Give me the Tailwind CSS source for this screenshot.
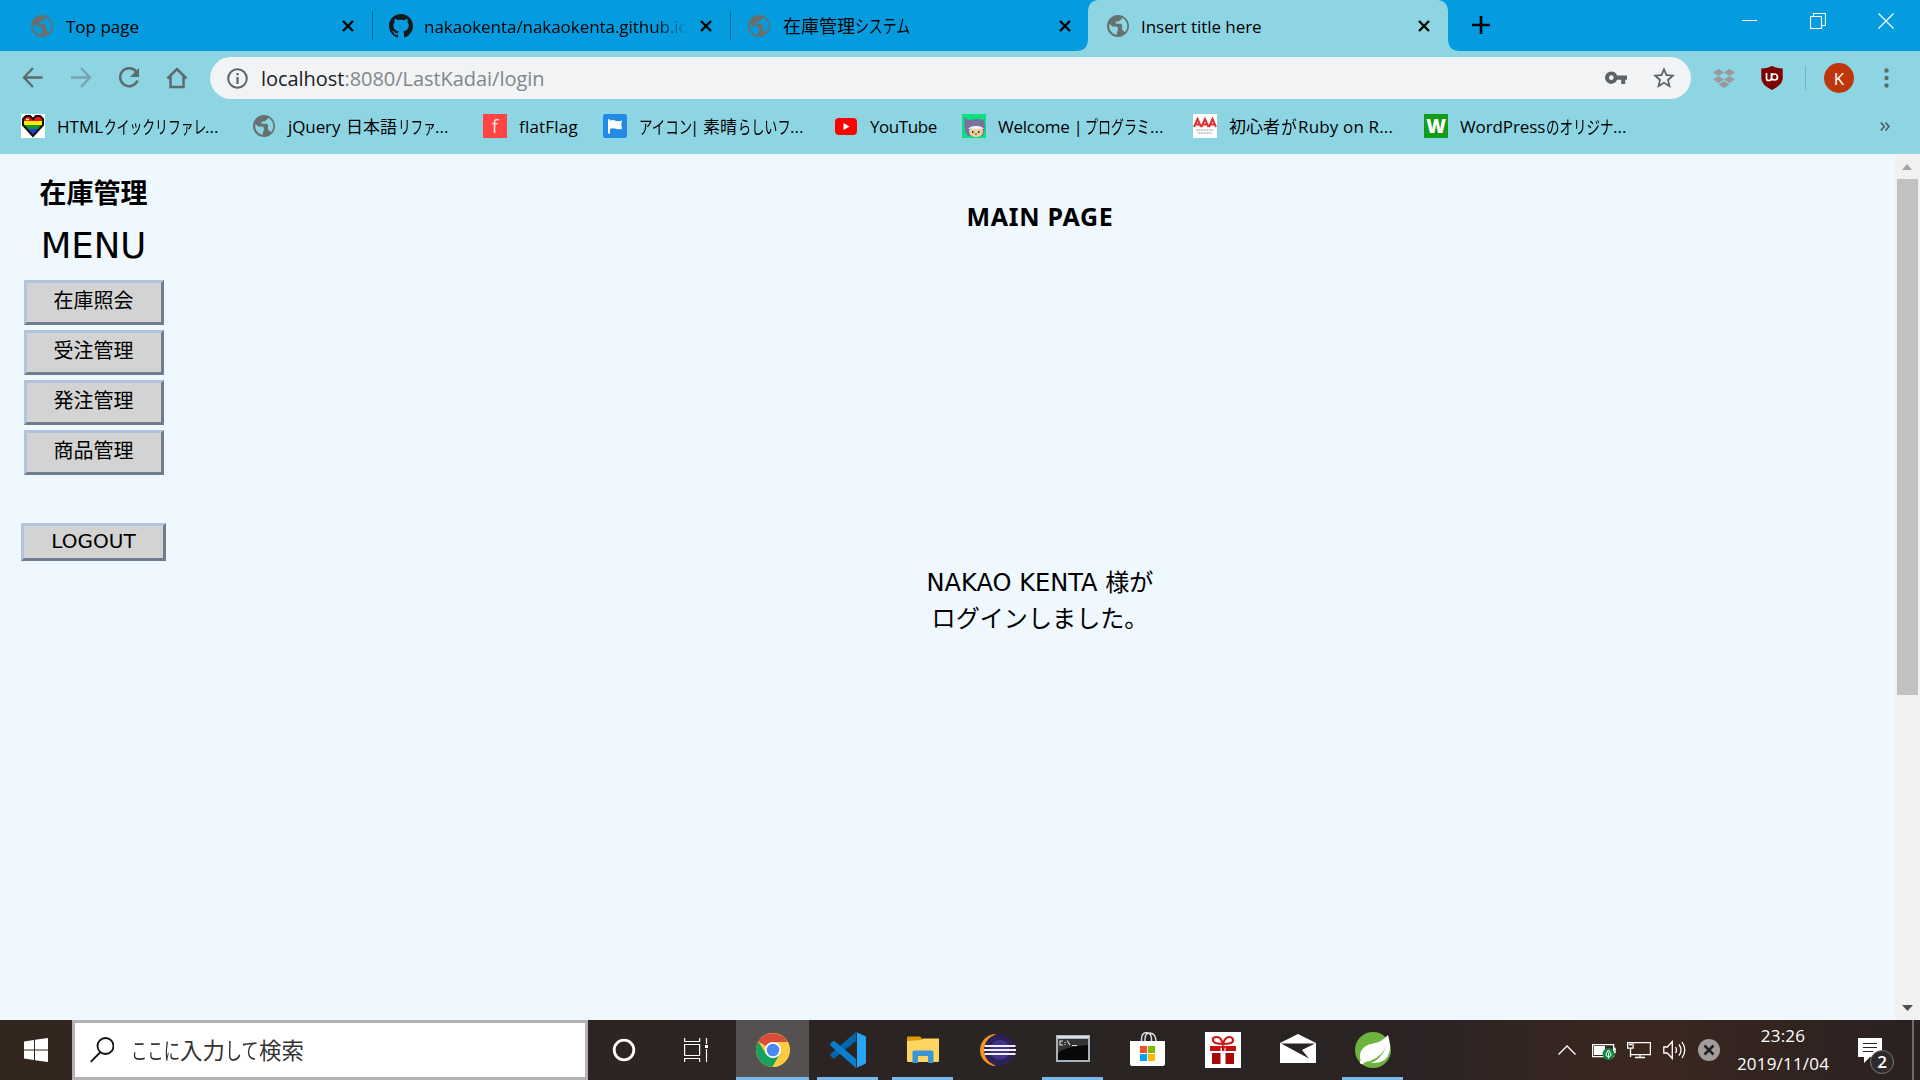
<!DOCTYPE html>
<html lang="ja">
<head>
<meta charset="utf-8">
<title>Insert title here</title>
<script src="https://cdn.jsdelivr.net/npm/@tailwindcss/browser@4"></script>
</head>
<body class="flex h-[1080px] w-[1920px] flex-col overflow-hidden bg-[#f0f8ff] font-['Open_Sans','Noto_Sans_CJK_JP',sans-serif] text-black">
<svg class="hidden">
  <symbol id="globe" viewBox="2 2 20 20"><path d="M12 2C6.48 2 2 6.48 2 12s4.48 10 10 10 10-4.48 10-10S17.52 2 12 2zm-1 17.93c-3.95-.49-7-3.85-7-7.93 0-.62.08-1.21.21-1.79L7 12.500h3q2 0 2 2t-1 3v2.430zm6.9-2.54c-.26-.81-1-1.390-1.900-1.390l-.5-2.500q1-2.500-1-3.500h-4q-1.500-.5-.5-2h2.500c.55 0 1-.45 1-1.500h.5c1.100 0 1.500-.400 1.500-1.500v-.41c2.930 1.190 5 4.060 5 7.410 0 2.080-.8 3.970-2.100 5.390z" fill="#66706f"/></symbol>
  <symbol id="close" viewBox="0 0 12 12"><path d="M1 1l10 10M11 1L1 11" stroke="#000" stroke-width="2.4"/></symbol>
</svg>

<!-- tab strip -->
<header class="flex h-[51px] shrink-0 bg-[#049cdf] text-[17px] leading-[51px] whitespace-nowrap">
  <div class="flex h-[51px] w-[372px] items-center pr-[18px] pl-[31px]">
    <svg class="size-[22px]"><use href="#globe"/></svg>
    <span class="ml-[13px] flex-1 pt-px">Top page</span>
    <svg class="size-3"><use href="#close"/></svg>
  </div>
  <div class="my-[11px] w-px bg-[#0b6591]"></div>
  <div class="flex h-[51px] w-[357px] items-center pr-[18px] pl-4">
    <svg class="size-6" viewBox="0 0 16 16"><path fill="#15191c" d="M8 0C3.58 0 0 3.58 0 8c0 3.54 2.29 6.53 5.47 7.59.4.07.55-.17.55-.38 0-.19-.01-.82-.01-1.49-2.01.37-2.53-.49-2.69-.94-.09-.23-.48-.94-.82-1.13-.28-.15-.68-.52-.01-.53.63-.01 1.08.58 1.23.82.72 1.21 1.87.87 2.33.66.07-.52.28-.87.51-1.07-1.78-.2-3.64-.89-3.64-3.95 0-.87.31-1.59.82-2.15-.08-.2-.36-1.02.08-2.12 0 0 .67-.21 2.2.82.64-.18 1.32-.27 2-.27s1.36.09 2 .27c1.53-1.04 2.2-.82 2.2-.82.44 1.1.16 1.92.08 2.12.51.56.82 1.27.82 2.15 0 3.07-1.87 3.75-3.65 3.95.29.25.54.73.54 1.48 0 1.07-.01 1.93-.01 2.2 0 .21.15.46.55.38A8.01 8.01 0 0016 8c0-4.42-3.58-8-8-8z"/></svg>
    <span class="ml-[11px] w-[263px] overflow-hidden bg-linear-to-r from-black from-88% to-transparent bg-clip-text pt-px tracking-[-0.05px] text-transparent">nakaokenta/nakaokenta.github.io</span>
    <svg class="ml-auto size-3"><use href="#close"/></svg>
  </div>
  <div class="my-[11px] w-px bg-[#0b6591]"></div>
  <div class="flex h-[51px] w-[357px] items-center pr-[17px] pl-[17px]">
    <svg class="size-[22px]"><use href="#globe"/></svg>
    <span class="ml-[13px] w-[72px] pt-px text-[18px]">在庫管理</span>
    <span class="w-14 pt-px"><span class="inline-block origin-left scale-x-[.77] text-[18px]">システム</span></span>
    <svg class="ml-auto size-3"><use href="#close"/></svg>
  </div>
  <div class="relative flex h-[51px] w-[360px] items-center rounded-t-[10px] bg-[#8ed5e4] pr-[18px] pl-[19px]">
    <svg class="absolute bottom-0 -left-3 size-3" viewBox="0 0 12 12"><path d="M12 0v12H0Q12 12 12 0z" fill="#8ed5e4"/></svg>
    <svg class="absolute -right-3 bottom-0 size-3" viewBox="0 0 12 12"><path d="M0 0v12h12Q0 12 0 0z" fill="#8ed5e4"/></svg>
    <svg class="size-[22px]"><use href="#globe"/></svg>
    <span class="ml-3 flex-1 pt-px tracking-[-0.05px]">Insert title here</span>
    <svg class="size-3"><use href="#close"/></svg>
  </div>
  <svg class="mt-4 ml-6 size-[18px]" viewBox="0 0 18 18"><path d="M9 0v18M0 9h18" stroke="#000" stroke-width="2.6"/></svg>
  <div class="ml-auto flex gap-[52px] pt-[13px] pr-[26px]">
    <svg class="size-4" viewBox="0 0 16 16"><path d="M0 7.500h15" stroke="#fff"/></svg>
    <svg class="size-4" viewBox="0 0 16 16"><path d="M.5 3.500h11v12H.5zM3.500 3.500v-3h12v12h-4" fill="none" stroke="#fff" stroke-width="1.200"/></svg>
    <svg class="size-4" viewBox="0 0 16 16"><path d="M.5.5l15 15M15.500.5l-15 15" stroke="#fff" stroke-width="1.200"/></svg>
  </div>
</header>

<!-- address row -->
<div class="flex h-[54px] shrink-0 items-center bg-[#8ed5e4] pl-[22px]">
  <div class="flex w-[188px] gap-[26px] text-[#5f6b6b]">
    <svg class="size-[22px]" viewBox="0 0 22 22" fill="none" stroke="currentColor" stroke-width="2.300"><path d="M20.500 10.500H3M11 1L2 10.500l9 9.500"/></svg>
    <svg class="size-[22px] opacity-45" viewBox="0 0 22 22" fill="none" stroke="currentColor" stroke-width="2.300"><path d="M1 10.500h18M11 1l9 9.500-9 9.500"/></svg>
    <svg class="size-[22px]" viewBox="0 0 22 22" fill="none"><path d="M18.500 5A9 9 0 1 0 19.500 13.500" stroke="currentColor" stroke-width="2.500"/><path d="M21 1v9h-9z" fill="currentColor"/></svg>
    <svg class="size-[22px]" viewBox="0 0 22 22" fill="none" stroke="currentColor" stroke-width="2.500"><path d="M1.500 11.500L11 2l9.500 9.500M4.500 9v11h13V9"/></svg>
  </div>
  <div class="flex h-[42px] w-[1481px] items-center rounded-full bg-[#f1f3f4] pr-[16px] pl-[17px]">
    <svg class="size-[21px]" viewBox="0 0 21 21"><circle cx="10.500" cy="10.500" r="9.300" fill="none" stroke="#5f6368" stroke-width="2"/><path d="M9.400 9h2.200v7H9.400zM9.400 5h2.200v2.200H9.400z" fill="#5f6368"/></svg>
    <span class="ml-[13px] flex-1 pt-0.5 text-[20px] leading-none tracking-[-0.04px] text-[#80868b]"><span class="text-[#202124]">localhost</span>:8080/LastKadai/login</span>
    <svg class="h-[14px] w-[22px]" viewBox="0 0 22 14"><path fill="#5f6368" fill-rule="evenodd" d="M6.300.5a6.200 6.200 0 0 1 5.800 4H22v4.200h-1.800v4.200h-4V8.700h-4.100A6.200 6.200 0 1 1 6.300.5zM6.300 4.300a2.300 2.300 0 1 0 0 4.700 2.300 2.300 0 0 0 0-4.700z"/></svg>
    <svg class="ml-[26px] size-[22px]" viewBox="2 2 20 20"><path fill="#5f6368" d="M22 9.240l-7.190-.62L12 2 9.190 8.630 2 9.240l5.460 4.730L5.820 21 12 17.270 18.180 21l-1.630-7.030L22 9.240zM12 15.400l-3.760 2.270 1-4.280-3.320-2.880 4.380-.38L12 6.100l1.710 4.040 4.380.38-3.320 2.880 1 4.280L12 15.400z"/></svg>
  </div>
  <svg class="ml-[22px] h-[19px] w-[22px]" viewBox="0 0 22 19" fill="#9a9898"><path d="M5.500 0L11 3.500 5.500 7 0 3.500zM16.500 0L22 3.500 16.500 7 11 3.500zM5.500 7l5.500 3.500L5.500 14 0 10.500zM16.500 7l5.500 3.500-5.500 3.500-5.500-3.500zM11 12l5.500 3.500L11 19l-5.500-3.500z"/></svg>
  <svg class="ml-[26px] h-6 w-[22px]" viewBox="0 0 22 24"><path d="M11 0q5 2.500 10.700 2.500V12q0 7-10.700 12Q.3 19 .3 12V2.500Q6 2.500 11 0z" fill="#800000"/><path d="M5.500 7v5.500q0 2 2.200 2 2.300 0 2.800-2V7M10.500 11a3 3 0 1 0 6 0 3 3 0 1 0-6 0" fill="none" stroke="#fff" stroke-width="1.700"/></svg>
  <div class="ml-[22px] h-6 w-px bg-[#79b2bf]"></div>
  <div class="ml-[18px] flex size-[30px] items-center justify-center rounded-full bg-[#bf360c] text-[17px] leading-none text-white">K</div>
  <svg class="ml-[30px] h-5 w-[5px]" viewBox="0 0 5 20" fill="#5f6b6b"><circle cx="2.500" cy="2.500" r="2.200"/><circle cx="2.500" cy="10" r="2.200"/><circle cx="2.500" cy="17.500" r="2.200"/></svg>
</div>

<!-- bookmarks bar -->
<nav class="flex h-[49px] shrink-0 items-start bg-[#8ed5e4] pt-[9px] pl-[21px] text-[17px] leading-[26px] whitespace-nowrap">
  <a class="flex w-[232px]">
    <svg class="size-6 bg-white" viewBox="0 0 24 24"><defs><clipPath id="heart"><path d="M12 22L2 11V5l3-3h4l3 3 3-3h4l3 3v6z"/></clipPath></defs><g clip-path="url(#heart)"><path fill="#f01414" d="M0 0h24v7H0z"/><path fill="#ffef00" d="M0 7h24v4H0z"/><path fill="#17922f" d="M0 11h24v4H0z"/><path fill="#2142d8" d="M0 15h24v9H0z"/></g><path d="M12 22L2 11V5l3-3h4l3 3 3-3h4l3 3v6z" fill="none" stroke="#111" stroke-width="2"/><path d="M5 5.500h3" stroke="#fff" stroke-width="1.500"/></svg>
    <span class="ml-3 w-[47px]">HTML</span><span class="w-[101px]"><span class="inline-block origin-left scale-x-[.71] text-[18px]">クイックリファレ</span></span><span>...</span>
  </a>
  <a class="flex w-[230px]">
    <svg class="mt-px size-[22px]"><use href="#globe"/></svg>
    <span class="ml-[13px] w-[58px] tracking-[-0.1px]">jQuery</span><span class="w-[52px]">日本語</span><span class="w-[37px]"><span class="inline-block origin-left scale-x-[.7] text-[18px]">リファ</span></span><span>...</span>
  </a>
  <a class="flex w-[120px]">
    <span class="flex size-6 items-center justify-center bg-[#ff4444] text-[19px] text-[#ffdede]">f</span>
    <span class="ml-3 tracking-[0.2px]">flatFlag</span>
  </a>
  <a class="flex w-[232px]">
    <svg class="size-6" viewBox="0 0 24 24"><rect width="24" height="24" rx="2.500" fill="#228ae6"/><path d="M5 5.500q1-1.200 2 0v1.200q2.500-1.200 5.500 0t6.500-.2l-.8 4 .8 4.300q-3.500 1-6 0t-6 0V19.500H5z" fill="#fff"/></svg>
    <span class="ml-[12px] w-[53px]"><span class="inline-block origin-left scale-x-[.75] text-[18px]">アイコン</span></span><span class="w-[11px] -translate-x-0.5">|</span><span class="w-[35px]">素晴</span><span class="w-[52px]"><span class="inline-block origin-left scale-x-[.73] text-[18px]">らしいフ</span></span><span>...</span>
  </a>
  <a class="flex w-[126px]">
    <svg class="mt-[4px] h-[17px] w-[22px]" viewBox="0 0 22 17"><rect width="22" height="17" rx="4" fill="#f00"/><path d="M8.500 5l6 3.500-6 3.500z" fill="#fff"/></svg>
    <span class="ml-[13px] tracking-[-0.45px]">YouTube</span>
  </a>
  <a class="ml-px flex w-[231px]">
    <svg class="size-6" viewBox="0 0 24 24"><path fill="#0be07e" d="M0 0h24v24H0z"/><path d="M2 4l5 2 10-1 5 1 1 8-2 8H6L3 18z" fill="#77719f"/><ellipse cx="14" cy="17.500" rx="7" ry="5.500" fill="#ecd0a0"/><path d="M6 15q2-3 8-3t8 3l-4-.5-4 .5-4-.5z" fill="#f5f1ff"/><path d="M10 17h1.500v2H10zM16 17h1.500v2H16z" fill="#442e28"/><circle cx="14" cy="20" r="1" fill="#a65a38"/></svg>
    <span class="ml-3 w-[87px] tracking-[-0.25px]">Welcome |</span><span class="w-[65px]"><span class="inline-block origin-left scale-x-[.72] text-[18px]">プログラミ</span></span><span>...</span>
  </a>
  <a class="flex w-[231px]">
    <svg class="size-6 bg-white" viewBox="0 0 24 24"><path d="M1 13l3.500-8 3.500 8M8.500 13L12 5l3.500 8M16 13l3.500-8 3.500 8M2.500 10.500h4M10 10.500h4M17.500 10.500h4" fill="none" stroke="#e03030" stroke-width="2"/><path d="M3 16h18M5 19h14" stroke="#999" stroke-width="1.200" stroke-dasharray="2 .6"/></svg>
    <span class="ml-3 w-[52px]">初心者</span><span class="w-[17px]"><span class="inline-block origin-left scale-x-[.88] text-[18px]">が</span></span><span class="tracking-[0.15px]">Ruby on R...</span>
  </a>
  <a class="flex">
    <span class="flex size-6 items-center justify-center bg-[#149b18] text-[19px] font-extrabold text-white">W</span>
    <span class="ml-3 w-[86px] tracking-[-0.1px]">WordPress</span><span class="w-[67px]"><span class="inline-block origin-left scale-x-[.75] text-[18px]">のオリジナ</span></span><span>...</span>
  </a>
  <svg class="mt-2 mr-[30px] ml-auto h-[9px] w-[10px]" viewBox="0 0 10 9"><path d="M.8.5l3.500 4-3.500 4M5.500.5L9 4.500l-3.500 4" fill="none" stroke="#4b5b5f" stroke-width="1.600"/></svg>
</nav>

<!-- page -->
<main class="flex h-[866px] shrink-0 font-['DejaVu_Sans','Noto_Sans_CJK_JP',sans-serif]">
  <aside class="flex w-[187px] flex-col items-center pt-[23px]">
    <h1 class="text-[27px] leading-[34px] font-bold">在庫管理</h1>
    <p class="mt-[14px] text-[35.500px] leading-[42px]">MENU</p>
    <ul class="mt-[13px] flex flex-col gap-[5px] pl-px text-[20px]">
      <li><button class="h-[45px] w-[140px] border-3 border-t-[#b0c4de] border-r-[#6f7d8e] border-b-[#6f7d8e] border-l-[#b0c4de] bg-[#d3d3d3] pr-px pb-1">在庫照会</button></li>
      <li><button class="h-[45px] w-[140px] border-3 border-t-[#b0c4de] border-r-[#6f7d8e] border-b-[#6f7d8e] border-l-[#b0c4de] bg-[#d3d3d3] pr-px pb-1">受注管理</button></li>
      <li><button class="h-[45px] w-[140px] border-3 border-t-[#b0c4de] border-r-[#6f7d8e] border-b-[#6f7d8e] border-l-[#b0c4de] bg-[#d3d3d3] pr-px pb-1">発注管理</button></li>
      <li><button class="h-[45px] w-[140px] border-3 border-t-[#b0c4de] border-r-[#6f7d8e] border-b-[#6f7d8e] border-l-[#b0c4de] bg-[#d3d3d3] pr-px pb-1">商品管理</button></li>
    </ul>
    <button class="mt-12 h-[38px] w-[145px] border-3 border-t-[#b0c4de] border-r-[#6f7d8e] border-b-[#6f7d8e] border-l-[#b0c4de] bg-[#d3d3d3] pb-0.5 text-[20px] leading-6">LOGOUT</button>
  </aside>
  <section class="flex w-[1706px] flex-col items-center text-center">
    <h2 class="mt-[45px] font-['Noto_Sans',sans-serif] text-[25px] leading-[34px] font-bold tracking-[0.7px]">MAIN PAGE</h2>
    <p class="mt-[332px] text-[24.100px] leading-9">NAKAO KENTA 様が<br>ログインしました。</p>
  </section>
  <div class="ml-auto flex w-[25px] flex-col items-center bg-[#f1f1f1] pr-px">
    <svg class="mt-2.5 h-1.5 w-2.5" viewBox="0 0 10 6"><path d="M5 0l5 6H0z" fill="#a3a3a3"/></svg>
    <div class="mt-[9px] h-[516px] w-[21px] bg-[#c1c1c1]"></div>
    <svg class="mt-auto mb-[9px] h-1.5 w-[11px]" viewBox="0 0 11 6"><path d="M0 0h11L5.500 6z" fill="#505050"/></svg>
  </div>
</main>

<!-- taskbar -->
<footer class="flex h-[60px] shrink-0 bg-linear-to-r from-[#33261f] via-[#2a2423] to-[#2b2223] text-white">
  <div class="flex w-[72px] items-center pl-6">
    <svg class="size-6" viewBox="0 0 24 24" fill="#fff"><path d="M0 3.500L10 2v9.500H0zM11 1.800L24 0v11.500H11zM0 12.500h10V22L0 20.500zM11 12.500h13V24l-13-1.800z"/></svg>
  </div>
  <div class="flex w-[516px] items-center border-3 border-[#b2b2b2] bg-white pl-[15px] text-[22.400px] whitespace-nowrap text-[#333]">
    <svg class="h-[26px] w-6" viewBox="0 0 24 26"><circle cx="15.500" cy="9" r="8" fill="none" stroke="#111" stroke-width="1.800"/><path d="M10 15.500L.8 24.800" stroke="#111" stroke-width="1.800"/></svg>
    <span class="ml-[17px] w-[49px] pt-0.5"><span class="inline-block origin-left scale-x-[.73]">ここに</span></span><span class="w-[45px] pt-0.5">入力</span><span class="w-[34px] pt-0.5"><span class="inline-block origin-left scale-x-[.76]">して</span></span><span class="pt-0.5">検索</span>
  </div>
  <div class="flex w-[147px] items-center pl-6">
    <svg class="size-6" viewBox="0 0 24 24"><circle cx="12" cy="12" r="9.800" fill="none" stroke="#fff" stroke-width="2.800"/></svg>
    <svg class="ml-[48px] size-6" viewBox="0 0 24 24"><path d="M.6 0v3.500h15V0M.6 6.500h15v11H.6zM.6 24v-3.500h15V24M22.500 0v6M22.500 11v13" fill="none" stroke="#fff" stroke-width="1.200"/><path d="M21 7h3v3h-3z" fill="#fff"/></svg>
  </div>
  <div class="flex">
    <div class="flex w-[75px] justify-center"><div class="flex w-[73px] items-center justify-center border-b-3 border-[#76b9ed] bg-[#545150]">
      <svg class="mt-[3px] size-[34px]" viewBox="0 0 34 34"><circle cx="17" cy="17" r="17" fill="#fbcb43"/><path d="M17 17L2.300 8.500A17 17 0 0 1 31.700 9H17z" fill="#db4b3c"/><path d="M2.300 8.500A17 17 0 0 0 16.500 34L24 21 10 21z" fill="#18a05e"/><path d="M17 9h14.700A17 17 0 0 1 16.500 34L24 21z" fill="#fbcb43"/><circle cx="17" cy="17" r="8" fill="#fff"/><circle cx="17" cy="17" r="6.300" fill="#4a87f0"/></svg>
    </div></div>
    <div class="flex w-[75px] justify-center"><div class="flex w-[61px] items-center justify-center border-b-3 border-[#76b9ed]">
      <svg class="mt-[3px] size-9" viewBox="0 0 36 36"><path d="M26 9L5 26q-1 1-2.300 0L.7 24q-1-1 0-2.300L26 0z" fill="#0065a9"/><path d="M26 27L5 9.500q-1-1-2.300 0L.7 11.500q-1 1 0 2.300L26 36z" fill="#0a80cc"/><path d="M26 0l9 4q1 .5 1 2v24q0 1.500-1 2l-9 4q1.500-1 1-3V3q.5-2-1-3z" fill="#27a4f2"/></svg>
    </div></div>
    <div class="flex w-[75px] justify-center"><div class="flex w-[61px] items-center justify-center border-b-3 border-[#76b9ed]">
      <svg class="mt-[3px] h-7 w-8" viewBox="0 0 32 28"><path d="M0 1.500Q0 .5 1 .5h12l2 2V6H0z" fill="#e09b06"/><path d="M0 5l14-1 2-1.500h16V25q0 1-1 1H1q-1 0-1-1z" fill="#ffd562"/><path d="M5.500 27V16q0-1.500 1.500-1.500h18q1.500 0 1.500 1.500v11H21v-7H11v7z" fill="#3a94d8"/></svg>
    </div></div>
    <div class="flex w-[75px] items-center justify-center">
      <svg class="size-9" viewBox="0 0 36 36"><path d="M16 2A16 16 0 0 0 16 34 19 19 0 0 1 16 2z" fill="#f7941e"/><circle cx="19.800" cy="18" r="15.800" fill="#2c2255"/><circle cx="20" cy="18" r="10" fill="#41338a"/><path d="M4.500 14h31M4 18h32M4.500 22h31" stroke="#f3f0fa" stroke-width="2"/></svg>
    </div>
    <div class="flex w-[75px] justify-center"><div class="flex w-[61px] items-center justify-center border-b-3 border-[#76b9ed]">
      <svg class="h-[27px] w-[34px]" viewBox="0 0 34 27"><path fill="#a9b4ba" d="M0 0h34v27H0z"/><path fill="#dae1e5" d="M1 1h32v2H1z"/><path fill="#080808" d="M2 4h30v21H2z"/><path d="M2 18Q8 12 32 10V4H2z" fill="#343434"/><path d="M7 6H4v4h3M9 7v1M9 9v1M11 5.500l3 4.500M16 10.500h5" stroke="#ddd" fill="none" stroke-width="1.200"/></svg>
    </div></div>
    <div class="flex w-[75px] items-center justify-center">
      <svg class="mb-0.5 h-[34px] w-[35px]" viewBox="0 0 35 34"><path d="M11.500 10V7q0-6 5-6.500 5 .5 5 6.500v3M15 10V7q0-6 5-6 6 .5 6 9" fill="none" stroke="#ddd" stroke-width="1.400"/><path d="M0 9h35v23q0 2-2 2H2q-2 0-2-2z" fill="#fff"/><path fill="#f25022" d="M10 14h7v7h-7z"/><path fill="#7fba00" d="M18 14h7v7h-7z"/><path fill="#00a4ef" d="M10 22h7v7h-7z"/><path fill="#ffb900" d="M18 22h7v7h-7z"/></svg>
    </div>
    <div class="flex w-[75px] items-center justify-center">
      <svg class="size-9 bg-white" viewBox="0 0 36 36"><path d="M18 12Q9 12 8 8.500T12 5q4 0 6 7 2-7 6-7t4 3.500-10 3.500z" fill="none" stroke="#d41414" stroke-width="2.200"/><path fill="#c41010" d="M5 14h10.500v5H5zM17 14h2.500v5H17zM20.500 14H31v5H20.500z"/><path fill="#a80808" d="M7 21h8.500v11H7zM20.500 21H29v11h-8.500z"/><path fill="#c41010" d="M15.500 14h5v2h-5z"/></svg>
    </div>
    <div class="flex w-[75px] items-center justify-center">
      <svg class="mb-[3px] h-[29px] w-9" viewBox="0 0 36 29"><path d="M0 9L18 0l18 9v20H0z" fill="#fff"/><path d="M1 9.500h34L22 16l7 8.500z" fill="#292223"/></svg>
    </div>
    <div class="flex w-[75px] justify-center"><div class="flex w-[61px] items-center justify-center border-b-3 border-[#76b9ed]">
      <svg class="mt-[3px] size-9" viewBox="0 0 36 36"><circle cx="18" cy="18" r="18" fill="#6db33f"/><path d="M33 3q3 10 1.500 17-3 11-15 11H8Q3 26 6 19q3-6 12-7.500T33 3z" fill="#fff"/><path d="M8 30.500q14-1 23-15-6 13-16 16z" fill="#6db33f"/><circle cx="7" cy="30" r="2.200" fill="#fff"/></svg>
    </div></div>
  </div>
  <div class="ml-auto flex h-[60px] flex-1 items-center bg-linear-to-r from-[#2a2324] via-[#3b271f] via-45% to-[#2a2122] pl-[148px]">
    <svg class="h-2.5 w-[18px]" viewBox="0 0 18 10"><path d="M.5 9.500L9 1l8.500 8.500" fill="none" stroke="#fff" stroke-width="1.400"/></svg>
    <svg class="ml-4 h-5 w-6" viewBox="0 0 24 20"><path d="M.6 4.600h21v12H.6zM21.600 8.500h1.500v4h-1.500" fill="none" stroke="#fff" stroke-width="1.300"/><path fill="#fff" d="M2 6h11v9H2z"/><circle cx="16.500" cy="14" r="6" fill="#10893e"/><path d="M16.500 10q-3 3.500-2.500 5.500l2.500 1.500 2.500-1.500q.5-2-2.500-5.500zM16.500 12.500v6" fill="none" stroke="#fff"/></svg>
    <svg class="ml-[11px] h-5 w-6" viewBox="0 0 24 20"><path d="M7 2.600h16.400v12H4M3.500 8v9M8 17.500h10M13 15v2.500M.6 2.600h5.500v5.500H.6zM2 4.500h3" fill="none" stroke="#fff" stroke-width="1.300"/></svg>
    <svg class="ml-3 h-5 w-[23px]" viewBox="0 0 23 20"><path d="M.8 7h3.500l5-5.500v17l-5-5.500H.8zM12.500 7q2 3 0 6M16 4.500q4 5.500 0 11M19 2q5.500 8 0 16" fill="none" stroke="#fff" stroke-width="1.300"/></svg>
    <svg class="ml-[12px] size-[22px]" viewBox="0 0 22 22"><circle cx="11" cy="11" r="11" fill="#a29c9a"/><path d="M6.500 6.500l9 9M15.500 6.500l-9 9" stroke="#222" stroke-width="2.500"/></svg>
    <div class="ml-4 w-[94px] text-center text-[17px] leading-7 tracking-[0.2px]"><div>23:26</div><div>2019/11/04</div></div>
    <svg class="ml-[28px] size-9 translate-y-1.5" viewBox="0 0 36 36"><path d="M0 0h24v19H12l-6 6v-6H0z" fill="#fff"/><path d="M5 5.500h14M5 9.500h14M5 13.500h10" stroke="#2a2122" stroke-width="1.200"/><circle cx="24" cy="24" r="11.500" fill="#2e2a2a" stroke="#777" stroke-width="1"/><text x="24" y="30" text-anchor="middle" font-size="17" font-weight="600" fill="#fff">2</text></svg>
    <div class="mr-1.5 ml-auto h-[60px] w-0.5 bg-[#6f6a6a]"></div>
  </div>
</footer>
</body>
</html>
